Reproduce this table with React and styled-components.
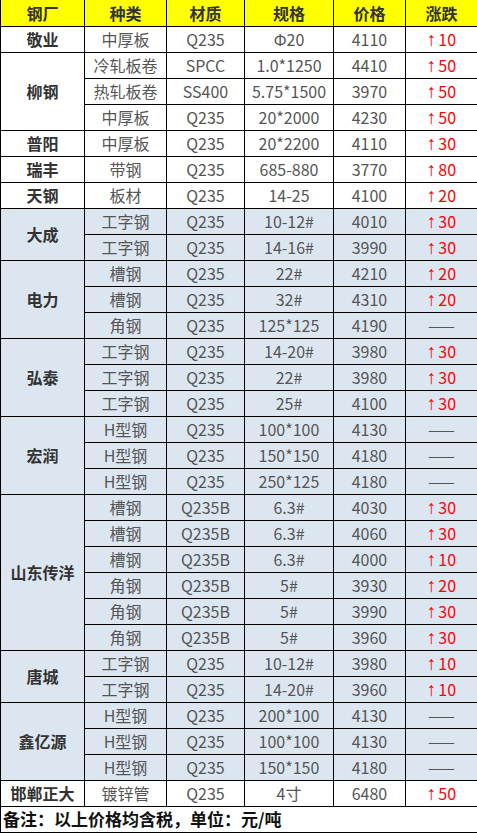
import React from "react";
import styled, { createGlobalStyle } from "styled-components";

const Global = createGlobalStyle`
  html, body { margin: 0; padding: 0; background: #fff; }
  body { font-family: "Noto Sans CJK SC", "Noto Sans", sans-serif; }
`;

const Table = styled.table`
  border-collapse: collapse;
  table-layout: fixed;
  width: 477px;
  font-family: "Noto Sans CJK SC", "Noto Sans", sans-serif;
  font-size: 16px;
`;

const Col = styled.col`
  width: ${(p) => p.$w}px;
`;

const Row = styled.tr`
  height: 26px;
`;

const HeadCell = styled.th`
  background: #ffff00;
  color: #333;
  font-weight: bold;
  height: 25px;
  padding: 0;
  border: 1px solid #000;
  border-top: none;
  text-align: center;
  vertical-align: middle;
  line-height: 18px;
`;

const Cell = styled.td`
  background: ${(p) => (p.$blue ? "#dce6f1" : "#fff")};
  color: ${(p) => (p.$up ? "#ff0000" : p.$bold ? "#333" : "#555")};
  font-weight: ${(p) => (p.$bold ? "bold" : "normal")};
  height: 25px;
  padding: 0;
  border: 1px solid #000;
  text-align: center;
  vertical-align: middle;
  line-height: 18px;
  white-space: nowrap;
  overflow: hidden;
`;

const Arrow = styled.span`
  font-family: "Liberation Sans", sans-serif;
  font-size: 19px;
  line-height: 18px;
  margin-right: 2px;
`;

const Footer = styled.td`
  height: 25px;
  padding: 0 0 0 2px;
  border: 1px solid #000;
  font-weight: bold;
  font-size: 17px;
  color: #111;
  text-align: left;
  vertical-align: middle;
  line-height: 20px;
  white-space: nowrap;
`;

const groups = [
  { name: "敬业", rows: [["中厚板", "Q235", "Φ20", "4110", "10"]] },
  {
    name: "柳钢",
    rows: [
      ["冷轧板卷", "SPCC", "1.0*1250", "4410", "50"],
      ["热轧板卷", "SS400", "5.75*1500", "3970", "50"],
      ["中厚板", "Q235", "20*2000", "4230", "50"],
    ],
  },
  { name: "普阳", rows: [["中厚板", "Q235", "20*2200", "4110", "30"]] },
  { name: "瑞丰", rows: [["带钢", "Q235", "685-880", "3770", "80"]] },
  { name: "天钢", rows: [["板材", "Q235", "14-25", "4100", "20"]] },
  {
    name: "大成",
    blue: true,
    rows: [
      ["工字钢", "Q235", "10-12#", "4010", "30"],
      ["工字钢", "Q235", "14-16#", "3990", "30"],
    ],
  },
  {
    name: "电力",
    blue: true,
    rows: [
      ["槽钢", "Q235", "22#", "4210", "20"],
      ["槽钢", "Q235", "32#", "4310", "20"],
      ["角钢", "Q235", "125*125", "4190", null],
    ],
  },
  {
    name: "弘泰",
    blue: true,
    rows: [
      ["工字钢", "Q235", "14-20#", "3980", "30"],
      ["工字钢", "Q235", "22#", "3980", "30"],
      ["工字钢", "Q235", "25#", "4100", "30"],
    ],
  },
  {
    name: "宏润",
    blue: true,
    rows: [
      ["H型钢", "Q235", "100*100", "4130", null],
      ["H型钢", "Q235", "150*150", "4180", null],
      ["H型钢", "Q235", "250*125", "4180", null],
    ],
  },
  {
    name: "山东传洋",
    blue: true,
    rows: [
      ["槽钢", "Q235B", "6.3#", "4030", "30"],
      ["槽钢", "Q235B", "6.3#", "4060", "30"],
      ["槽钢", "Q235B", "6.3#", "4000", "10"],
      ["角钢", "Q235B", "5#", "3930", "20"],
      ["角钢", "Q235B", "5#", "3990", "30"],
      ["角钢", "Q235B", "5#", "3960", "30"],
    ],
  },
  {
    name: "唐城",
    blue: true,
    rows: [
      ["工字钢", "Q235", "10-12#", "3980", "10"],
      ["工字钢", "Q235", "14-20#", "3960", "10"],
    ],
  },
  {
    name: "鑫亿源",
    blue: true,
    rows: [
      ["H型钢", "Q235", "200*100", "4130", null],
      ["H型钢", "Q235", "100*100", "4130", null],
      ["H型钢", "Q235", "150*150", "4180", null],
    ],
  },
  { name: "邯郸正大", rows: [["镀锌管", "Q235", "4寸", "6480", "50"]] },
];

const widths = [84, 82, 78, 89, 72, 72];
const heads = ["钢厂", "种类", "材质", "规格", "价格", "涨跌"];

export default function App() {
  return (
    <>
      <Global />
      <Table>
        <colgroup>
          {widths.map((w, i) => (
            <Col key={i} $w={w} />
          ))}
        </colgroup>
        <thead>
          <Row>
            {heads.map((h) => (
              <HeadCell key={h}>{h}</HeadCell>
            ))}
          </Row>
        </thead>
        <tbody>
          {groups.map((g) =>
            g.rows.map((r, i) => (
              <Row key={g.name + i}>
                {i === 0 && (
                  <Cell $bold $blue={g.blue} rowSpan={g.rows.length}>
                    {g.name}
                  </Cell>
                )}
                <Cell $blue={g.blue}>{r[0]}</Cell>
                <Cell $blue={g.blue}>{r[1]}</Cell>
                <Cell $blue={g.blue}>{r[2]}</Cell>
                <Cell $blue={g.blue}>{r[3]}</Cell>
                {r[4] ? (
                  <Cell $blue={g.blue} $up>
                    <Arrow>↑</Arrow>
                    {r[4]}
                  </Cell>
                ) : (
                  <Cell $blue={g.blue}>——</Cell>
                )}
              </Row>
            ))
          )}
          <Row>
            <Footer colSpan={6}>备注：以上价格均含税，单位：元/吨</Footer>
          </Row>
        </tbody>
      </Table>
    </>
  );
}
